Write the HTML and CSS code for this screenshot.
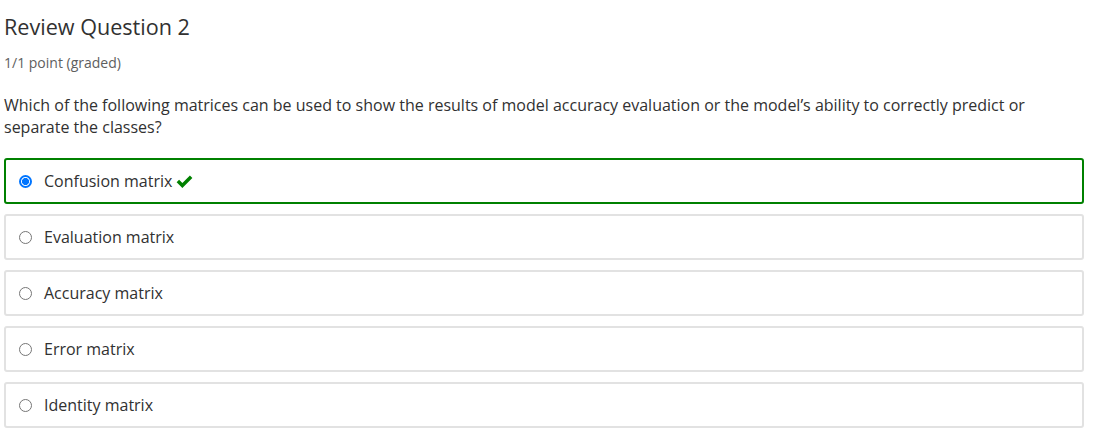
FILE: index.html
```html
<!DOCTYPE html>
<html>
<head>
<meta charset="utf-8">
<link rel="stylesheet" href="styles.css">
</head>
<body>
<div class="problem">
  <h3 class="title">Review Question 2</h3>
  <div class="score">1/1 point (graded)</div>
  <p class="question">Which of the following matrices can be used to show the results of model accuracy evaluation or the model’s ability to correctly predict or separate the classes?</p>
  <div class="options">
    <label class="option correct">
      <span class="radio checked"></span>
      <span class="label">Confusion matrix</span>
      <svg class="check" width="17" height="15" viewBox="0 0 16 14"><path d="M0.6 7.6 L2.9 5.3 L6 8.4 L13.1 1.3 L15.4 3.6 L6 13 Z" fill="#008100"/></svg>
    </label>
    <label class="option">
      <span class="radio"></span>
      <span class="label">Evaluation matrix</span>
    </label>
    <label class="option">
      <span class="radio"></span>
      <span class="label">Accuracy matrix</span>
    </label>
    <label class="option">
      <span class="radio"></span>
      <span class="label">Error matrix</span>
    </label>
    <label class="option">
      <span class="radio"></span>
      <span class="label">Identity matrix</span>
    </label>
  </div>
</div>
</body>
</html>
```
FILE: styles.css
```css
html, body {
  margin: 0;
  padding: 0;
  background: #fff;
}
body {
  font-family: "Open Sans", "Liberation Sans", sans-serif;
  color: #313131;
}
.problem {
  width: 1080px;
  padding: 12px 0 0 4px;
}
.title {
  margin: 0;
  font-size: 21.6px;
  font-weight: 400;
  line-height: 30px;
  color: #313131;
}
.score {
  margin-top: 11px;
  font-size: 14px;
  line-height: 20px;
  color: #5e5e5e;
}
.question {
  margin: 21px 0 0 0;
  font-size: 16px;
  line-height: 22px;
  color: #313131;
}
.options {
  margin-top: 20px;
  display: flex;
  flex-direction: column;
  gap: 10px;
}
.option {
  box-sizing: border-box;
  height: 46px;
  display: flex;
  align-items: center;
  border: 2px solid #e2e2e2;
  border-radius: 3px;
  padding-left: 13px;
  font-size: 16px;
}
.option.correct {
  border-color: #008100;
}
.radio {
  box-sizing: border-box;
  width: 13px;
  height: 13px;
  border-radius: 50%;
  border: 1px solid #767676;
  margin-right: 12px;
  flex: none;
}
.radio.checked {
  border: 2px solid #0075ff;
  background: radial-gradient(circle, #0075ff 0 3.3px, #fff 3.8px);
}
.label {
  color: #313131;
}
.check {
  margin-left: 4px;
  margin-top: 1px;
}
```
